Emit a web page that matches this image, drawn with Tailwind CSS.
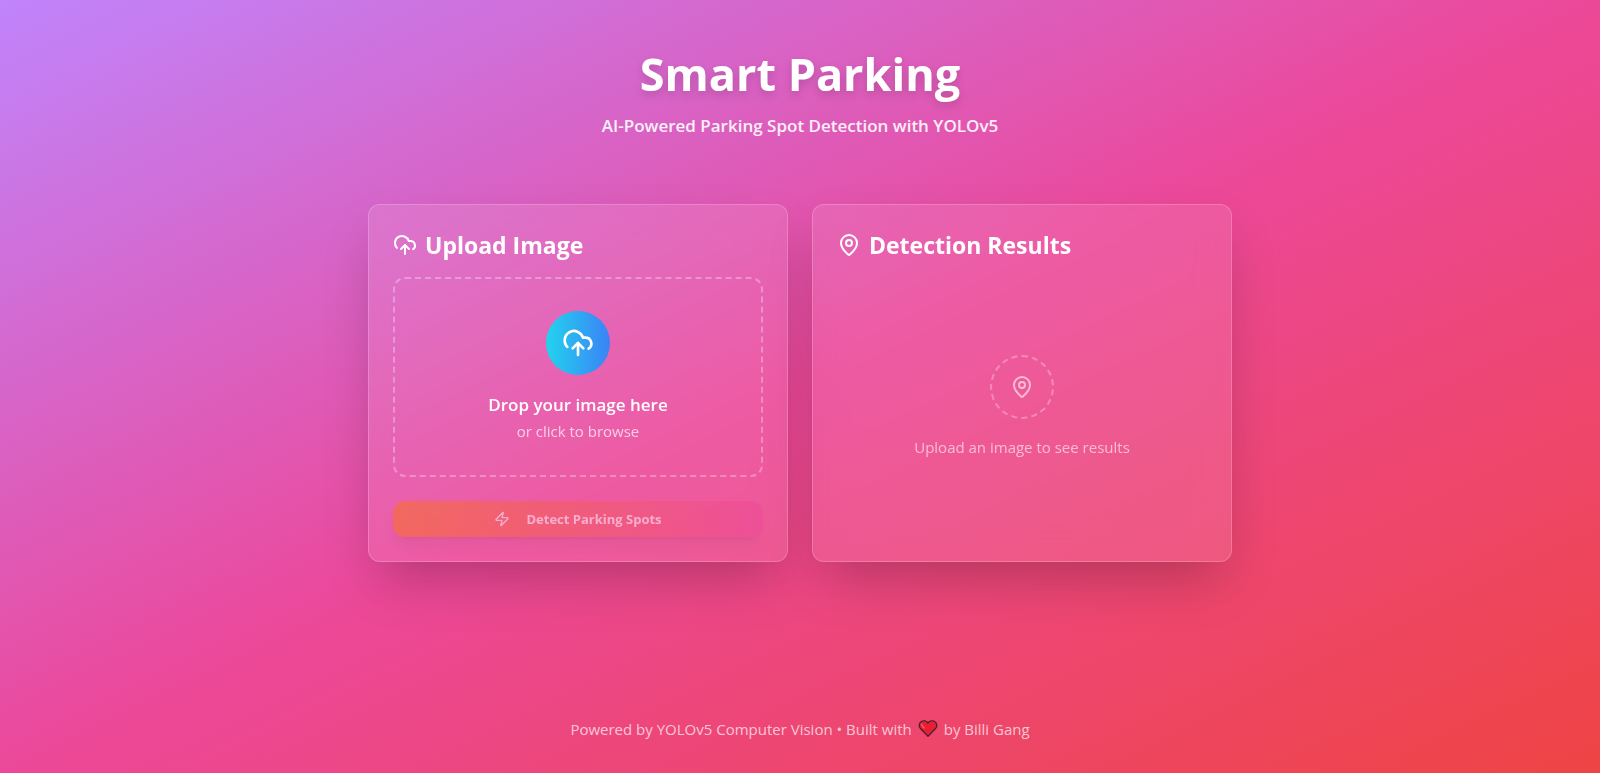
<!DOCTYPE html>
<html lang="en">
<head>
<meta charset="utf-8">
<meta name="viewport" content="width=device-width, initial-scale=1">
<title>Smart Parking</title>
<script src="https://cdn.jsdelivr.net/npm/@tailwindcss/browser@4"></script>
</head>
<body class="min-h-screen bg-linear-to-br/srgb from-[#c084fc] via-[#ec4899] to-[#ef4444] font-['Segoe_UI','Open_Sans','Noto_Sans',sans-serif] text-white">
<div class="mx-auto flex min-h-screen max-w-4xl flex-col px-4 pt-12 pb-8">
  <header class="mb-16 text-center">
    <h1 class="mb-3 text-[45px] leading-[52px] font-bold drop-shadow-lg">Smart Parking</h1>
    <p class="text-[17px] leading-7 font-semibold text-white/90">AI-Powered Parking Spot Detection with YOLOv5</p>
  </header>

  <main class="grid gap-6 md:grid-cols-2">
    <section class="rounded-xl border border-white/20 bg-white/10 p-6 shadow-[0_25px_50px_-12px_rgb(0_0_0/0.25)] backdrop-blur-lg">
      <h2 class="mb-4 flex items-center gap-2 text-[23px] leading-8 font-bold">
        <svg class="size-6" viewBox="0 0 24 24" fill="none" stroke="currentColor" stroke-width="2" stroke-linecap="round" stroke-linejoin="round" aria-hidden="true"><path d="M4 14.899A7 7 0 1 1 15.71 8h1.79a4.5 4.5 0 0 1 2.5 8.242"/><path d="M12 12v9"/><path d="m16 16-4-4-4 4"/></svg>
        Upload Image
      </h2>
      <label for="image" class="mb-6 flex cursor-pointer flex-col items-center rounded-xl border-2 border-dashed border-white/30 p-8 text-center">
        <span class="mb-4 flex size-16 items-center justify-center rounded-full bg-linear-to-r/srgb from-[#22d3ee] to-[#3b82f6]">
          <svg class="size-8" viewBox="0 0 24 24" fill="none" stroke="currentColor" stroke-width="2" stroke-linecap="round" stroke-linejoin="round" aria-hidden="true"><path d="M4 14.899A7 7 0 1 1 15.71 8h1.79a4.5 4.5 0 0 1 2.5 8.242"/><path d="M12 12v9"/><path d="m16 16-4-4-4 4"/></svg>
        </span>
        <span class="text-[17px] leading-7 font-semibold">Drop your image here</span>
        <span class="text-[15px] leading-6 text-white/70">or click to browse</span>
        <input id="image" type="file" accept="image/*" class="hidden">
      </label>
      <button type="button" disabled class="flex h-9 w-full items-center justify-center gap-4 rounded-xl bg-linear-to-r/srgb from-[#f97316] to-[#ec4899] text-[13px] leading-5 font-bold opacity-50 shadow-lg">
        <svg class="size-4" viewBox="0 0 24 24" fill="none" stroke="currentColor" stroke-width="2" stroke-linecap="round" stroke-linejoin="round" aria-hidden="true"><path d="M4 14a1 1 0 0 1-.78-1.63l9.9-10.2a.5.5 0 0 1 .86.46l-1.92 6.02A1 1 0 0 0 13 10h7a1 1 0 0 1 .78 1.63l-9.9 10.2a.5.5 0 0 1-.86-.46l1.92-6.02A1 1 0 0 0 11 14z"/></svg>
        Detect Parking Spots
      </button>
    </section>

    <section class="flex flex-col rounded-xl border border-white/20 bg-white/10 p-6 shadow-[0_25px_50px_-12px_rgb(0_0_0/0.25)] backdrop-blur-lg">
      <h2 class="mb-4 flex items-center gap-2 text-[23px] leading-8 font-bold">
        <svg class="size-6" viewBox="0 0 24 24" fill="none" stroke="currentColor" stroke-width="2" stroke-linecap="round" stroke-linejoin="round" aria-hidden="true"><path d="M20 10c0 4.993-5.539 10.193-7.399 11.799a1 1 0 0 1-1.202 0C9.539 20.193 4 14.993 4 10a8 8 0 0 1 16 0"/><circle cx="12" cy="10" r="3"/></svg>
        Detection Results
      </h2>
      <div class="flex grow flex-col items-center justify-center text-white/60">
        <div class="mb-4 flex size-16 items-center justify-center rounded-full border-2 border-dashed border-white/30">
          <svg class="size-6" viewBox="0 0 24 24" fill="none" stroke="currentColor" stroke-width="2" stroke-linecap="round" stroke-linejoin="round" aria-hidden="true"><path d="M20 10c0 4.993-5.539 10.193-7.399 11.799a1 1 0 0 1-1.202 0C9.539 20.193 4 14.993 4 10a8 8 0 0 1 16 0"/><circle cx="12" cy="10" r="3"/></svg>
        </div>
        <p class="text-[15px] leading-6">Upload an image to see results</p>
      </div>
    </section>
  </main>

  <footer class="mt-auto flex items-center justify-center gap-1 text-[15px] leading-6 text-white/70">
    <span>Powered by YOLOv5 Computer Vision • Built with</span>
    <svg class="mx-0.5 size-5" viewBox="0 0 20 20" role="img" aria-label="love"><path d="M10 17.2 2.2 9.2C.6 7.200 1 4 3 2.700c2.300-1.600 5.300-1 7 1.300 1.700-2.300 4.700-2.900 7-1.300 2 1.300 2.400 4.500.8 6.500z" fill="#e81f33" stroke="#4a2230" stroke-width="1.300" stroke-linejoin="round"/><path d="M3.800 5.300c.2 1.600 1 2.600 2.300 3.700" fill="none" stroke="#f4606c" stroke-width="1.400" stroke-linecap="round"/></svg>
    <span>by Billi Gang</span>
  </footer>
</div>
</body>
</html>
